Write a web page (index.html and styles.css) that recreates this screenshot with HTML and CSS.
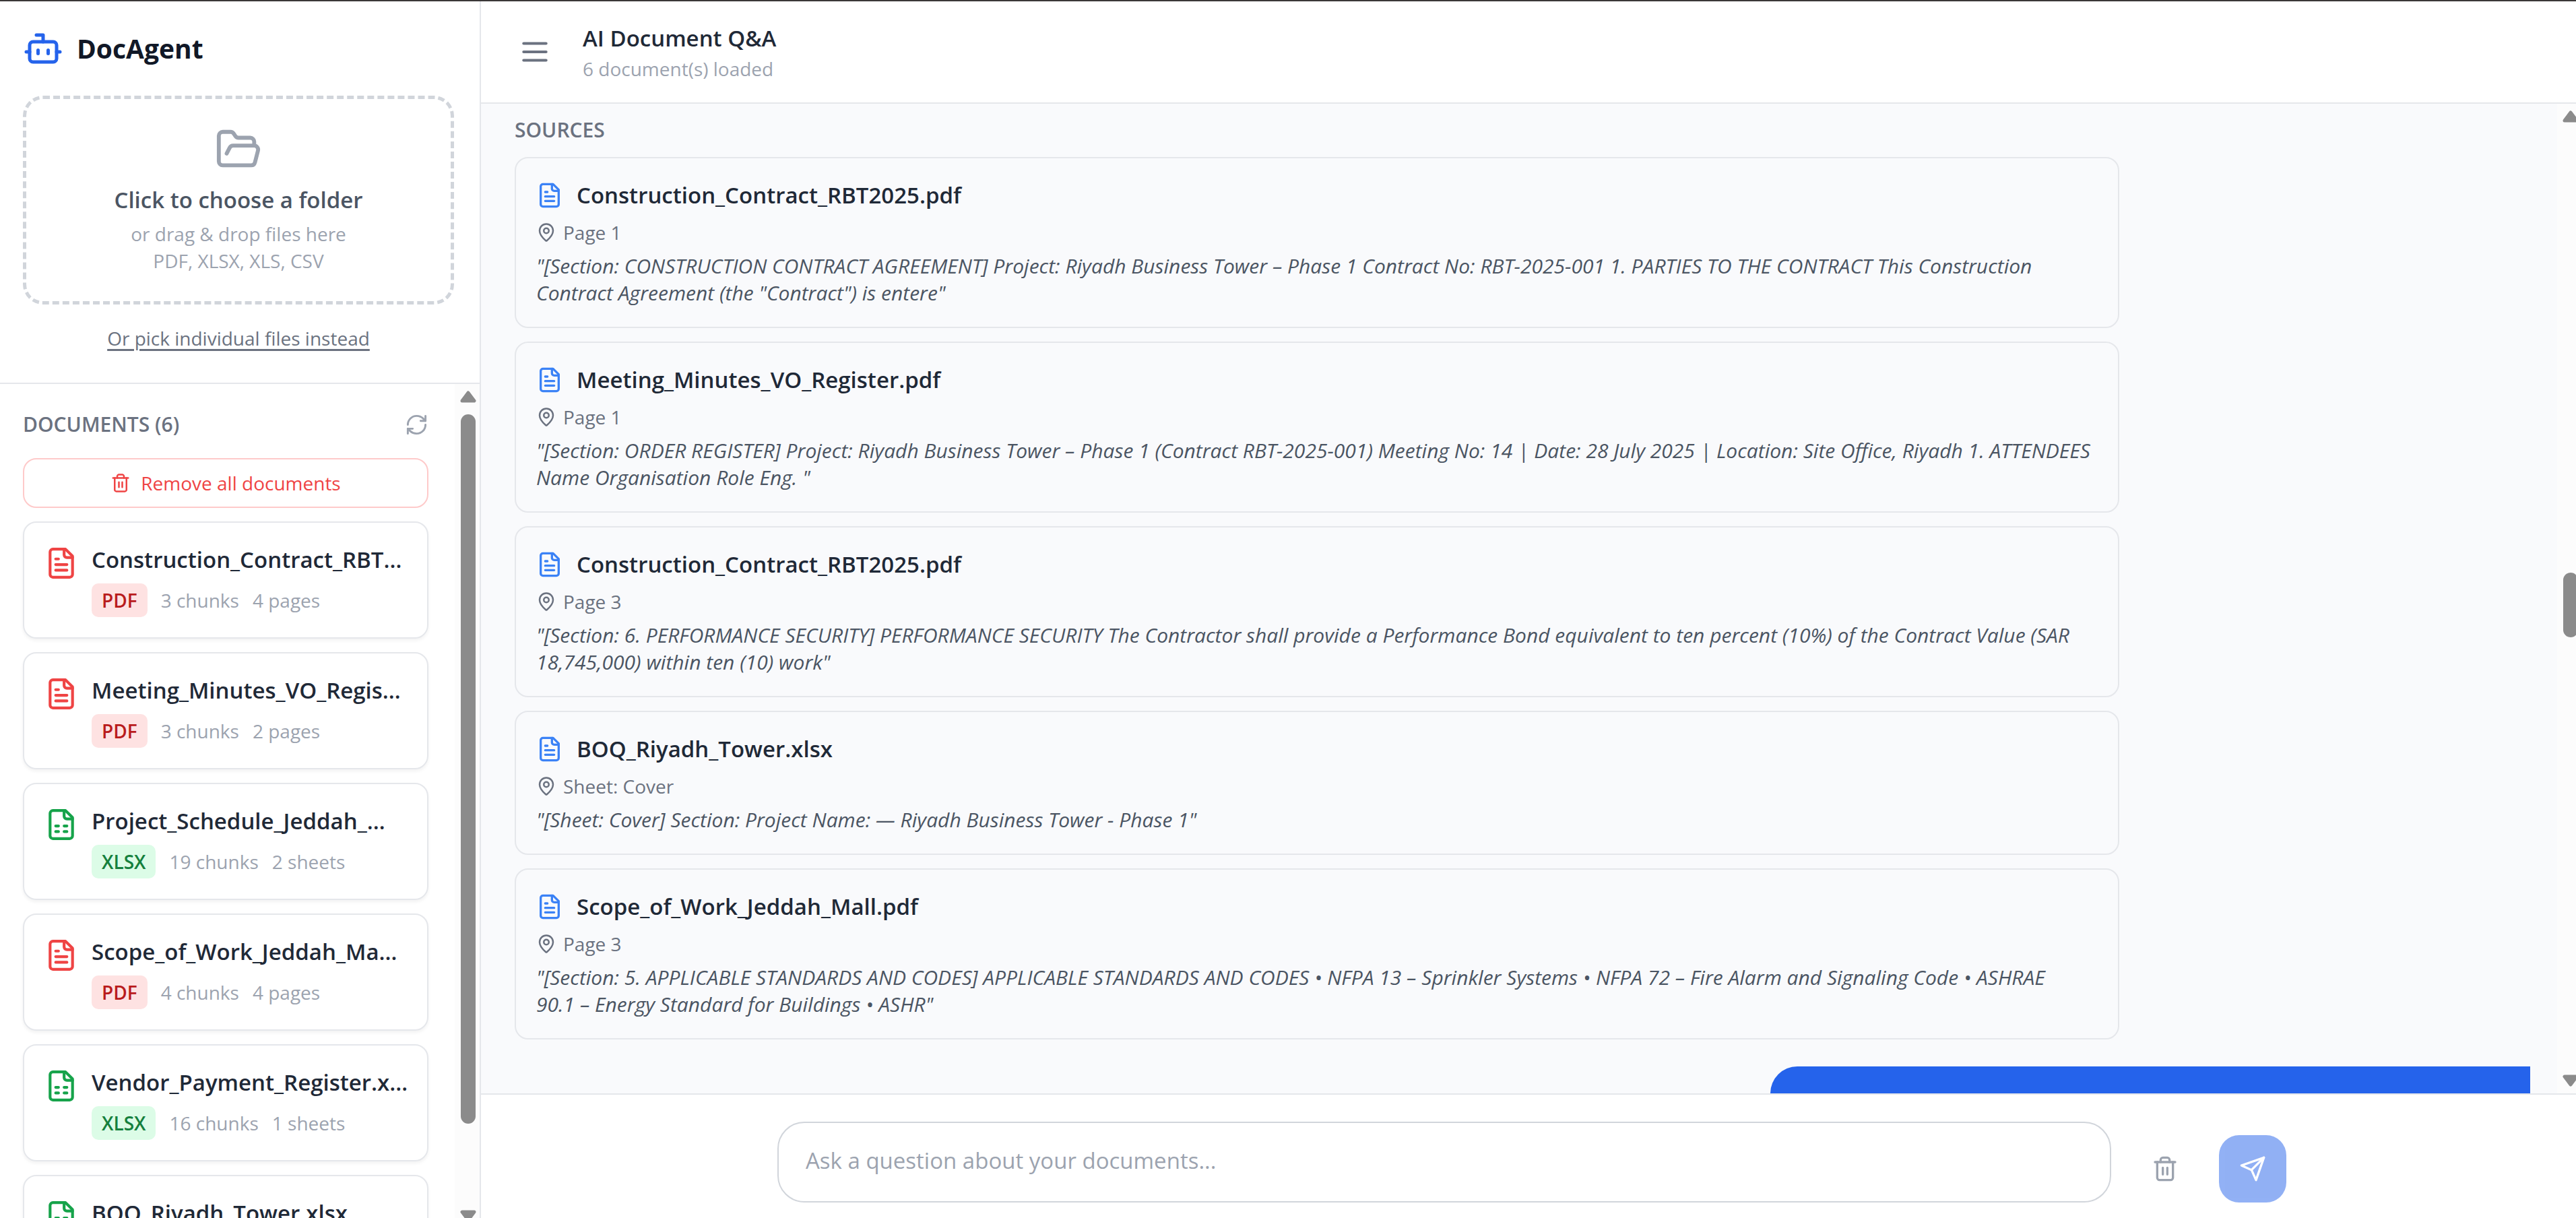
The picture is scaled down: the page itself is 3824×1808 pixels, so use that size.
FILE: index.html
```
<!DOCTYPE html>
<html lang="en">
<head>
<meta charset="utf-8">
<meta name="viewport" content="width=device-width, initial-scale=1">
<title>DocAgent</title>
<link rel="stylesheet" href="styles.css">
</head>
<body>
<svg class="sprite" aria-hidden="true">
  <symbol id="bot" viewBox="0 0 24 24"><path d="M12 8V4H8"/><rect width="16" height="12" x="4" y="8" rx="2"/><path d="M2 14h2M20 14h2M15 13v2M9 13v2"/></symbol>
  <symbol id="folder" viewBox="0 0 24 24"><path d="m6 14 1.5-2.9A2 2 0 0 1 9.24 10H20a2 2 0 0 1 1.94 2.5l-1.54 6a2 2 0 0 1-1.95 1.5H4a2 2 0 0 1-2-2V5a2 2 0 0 1 2-2h3.9a2 2 0 0 1 1.69.9l.81 1.2a2 2 0 0 0 1.67.9H18a2 2 0 0 1 2 2v2"/></symbol>
  <symbol id="refresh" viewBox="0 0 24 24"><path d="M3 12a9 9 0 0 1 9-9 9.75 9.75 0 0 1 6.74 2.74L21 8"/><path d="M21 3v5h-5"/><path d="M21 12a9 9 0 0 1-9 9 9.75 9.75 0 0 1-6.74-2.74L3 16"/><path d="M8 16H3v5"/></symbol>
  <symbol id="trash" viewBox="0 0 24 24"><path d="M3 6h18"/><path d="M19 6v14c0 1-1 2-2 2H7c-1 0-2-1-2-2V6"/><path d="M8 6V4c0-1 1-2 2-2h4c1 0 2 1 2 2v2"/><path d="M10 11v6M14 11v6"/></symbol>
  <symbol id="file-text" viewBox="0 0 24 24"><path d="M15 2H6a2 2 0 0 0-2 2v16a2 2 0 0 0 2 2h12a2 2 0 0 0 2-2V7Z"/><path d="M14 2v4a2 2 0 0 0 2 2h4"/><path d="M10 9H8M16 13H8M16 17H8"/></symbol>
  <symbol id="file-sheet" viewBox="0 0 24 24"><path d="M15 2H6a2 2 0 0 0-2 2v16a2 2 0 0 0 2 2h12a2 2 0 0 0 2-2V7Z"/><path d="M14 2v4a2 2 0 0 0 2 2h4"/><path d="M8 13h2M14 13h2M8 17h2M14 17h2"/></symbol>
  <symbol id="menu" viewBox="0 0 24 24"><path d="M4 6h16M4 12h16M4 18h16"/></symbol>
  <symbol id="pin" viewBox="0 0 24 24"><path d="M20 10c0 4.993-5.539 10.193-7.399 11.799a1 1 0 0 1-1.202 0C9.539 20.193 4 14.993 4 10a8 8 0 0 1 16 0"/><circle cx="12" cy="10" r="3"/></symbol>
  <symbol id="send" viewBox="0 0 24 24"><path d="m22 2-7 20-4-9-9-4Z"/><path d="M22 2 11 13"/></symbol>
  <symbol id="arrow" viewBox="0 0 24 18"><path d="M12 3 21 15H3Z" fill="currentColor" stroke-width="5"/></symbol>
</svg>

<div class="app">
  <aside class="sidebar">
    <div class="upload">
      <div class="brand"><svg class="icon icon-60"><use href="#bot"/></svg><h1>DocAgent</h1></div>
      <button type="button" class="dropzone">
        <svg class="icon icon-70"><use href="#folder"/></svg>
        <span class="dropzone-title">Click to choose a folder</span>
        <span class="dropzone-hint">or drag &amp; drop files here</span>
        <span class="dropzone-hint">PDF, XLSX, XLS, CSV</span>
      </button>
      <button type="button" class="pick-files">Or pick individual files instead</button>
    </div>
    <div class="library">
      <section class="library-content">
        <div class="library-head">
          <h2 class="label">Documents (6)</h2>
          <button type="button" class="refresh" aria-label="Refresh documents"><svg class="icon icon-35"><use href="#refresh"/></svg></button>
        </div>
        <button type="button" class="remove-all"><svg class="icon icon-30"><use href="#trash"/></svg>Remove all documents</button>
        <ul class="docs">
          <li class="doc pdf"><svg class="icon icon-50"><use href="#file-text"/></svg><div class="doc-body"><p class="doc-name">Construction_Contract_RBT…</p><p class="doc-meta"><span class="badge">PDF</span><span>3 chunks</span><span>4 pages</span></p></div></li>
          <li class="doc pdf"><svg class="icon icon-50"><use href="#file-text"/></svg><div class="doc-body"><p class="doc-name">Meeting_Minutes_VO_Regis…</p><p class="doc-meta"><span class="badge">PDF</span><span>3 chunks</span><span>2 pages</span></p></div></li>
          <li class="doc xlsx"><svg class="icon icon-50"><use href="#file-sheet"/></svg><div class="doc-body"><p class="doc-name">Project_Schedule_Jeddah_…</p><p class="doc-meta"><span class="badge">XLSX</span><span>19 chunks</span><span>2 sheets</span></p></div></li>
          <li class="doc pdf"><svg class="icon icon-50"><use href="#file-text"/></svg><div class="doc-body"><p class="doc-name">Scope_of_Work_Jeddah_Ma…</p><p class="doc-meta"><span class="badge">PDF</span><span>4 chunks</span><span>4 pages</span></p></div></li>
          <li class="doc xlsx"><svg class="icon icon-50"><use href="#file-sheet"/></svg><div class="doc-body"><p class="doc-name">Vendor_Payment_Register.x…</p><p class="doc-meta"><span class="badge">XLSX</span><span>16 chunks</span><span>1 sheets</span></p></div></li>
          <li class="doc xlsx"><svg class="icon icon-50"><use href="#file-sheet"/></svg><div class="doc-body"><p class="doc-name">BOQ_Riyadh_Tower.xlsx</p></div></li>
        </ul>
      </section>
      <div class="scrollbar library-scrollbar" aria-hidden="true">
        <svg class="arrow"><use href="#arrow"/></svg>
        <div class="track"><div class="thumb"></div></div>
        <svg class="arrow down"><use href="#arrow"/></svg>
      </div>
    </div>
  </aside>

  <main class="main">
    <header class="topbar">
      <button type="button" class="menu" aria-label="Toggle sidebar"><svg class="icon icon-50"><use href="#menu"/></svg></button>
      <div><h2 class="topbar-title">AI Document Q&amp;A</h2><p class="topbar-sub">6 document(s) loaded</p></div>
    </header>

    <div class="chat">
      <div class="messages">
        <section class="sources">
          <h3 class="label">Sources</h3>
          <article class="source">
            <h4><svg class="icon icon-40"><use href="#file-text"/></svg>Construction_Contract_RBT2025.pdf</h4>
            <p class="place"><svg class="icon icon-30"><use href="#pin"/></svg>Page 1</p>
            <p class="quote">"[Section: CONSTRUCTION CONTRACT AGREEMENT] Project: Riyadh Business Tower – Phase 1 Contract No: RBT-2025-001 1. PARTIES TO THE CONTRACT This Construction Contract Agreement (the "Contract") is entere"</p>
          </article>
          <article class="source">
            <h4><svg class="icon icon-40"><use href="#file-text"/></svg>Meeting_Minutes_VO_Register.pdf</h4>
            <p class="place"><svg class="icon icon-30"><use href="#pin"/></svg>Page 1</p>
            <p class="quote">"[Section: ORDER REGISTER] Project: Riyadh Business Tower – Phase 1 (Contract RBT-2025-001) Meeting No: 14 | Date: 28 July 2025 | Location: Site Office, Riyadh 1. ATTENDEES Name Organisation Role Eng. "</p>
          </article>
          <article class="source">
            <h4><svg class="icon icon-40"><use href="#file-text"/></svg>Construction_Contract_RBT2025.pdf</h4>
            <p class="place"><svg class="icon icon-30"><use href="#pin"/></svg>Page 3</p>
            <p class="quote">"[Section: 6. PERFORMANCE SECURITY] PERFORMANCE SECURITY The Contractor shall provide a Performance Bond equivalent to ten percent (10%) of the Contract Value (SAR 18,745,000) within ten (10) work"</p>
          </article>
          <article class="source">
            <h4><svg class="icon icon-40"><use href="#file-text"/></svg>BOQ_Riyadh_Tower.xlsx</h4>
            <p class="place"><svg class="icon icon-30"><use href="#pin"/></svg>Sheet: Cover</p>
            <p class="quote">"[Sheet: Cover] Section: Project Name: — Riyadh Business Tower - Phase 1"</p>
          </article>
          <article class="source">
            <h4><svg class="icon icon-40"><use href="#file-text"/></svg>Scope_of_Work_Jeddah_Mall.pdf</h4>
            <p class="place"><svg class="icon icon-30"><use href="#pin"/></svg>Page 3</p>
            <p class="quote">"[Section: 5. APPLICABLE STANDARDS AND CODES] APPLICABLE STANDARDS AND CODES • NFPA 13 – Sprinkler Systems • NFPA 72 – Fire Alarm and Signaling Code • ASHRAE 90.1&nbsp;–&nbsp;Energy Standard for Buildings • ASHR"</p>
          </article>
        </section>
        <div class="bubble"></div>
      </div>
      <div class="scrollbar chat-scrollbar" aria-hidden="true">
        <svg class="arrow"><use href="#arrow"/></svg>
        <div class="track"><div class="thumb"></div></div>
        <svg class="arrow down"><use href="#arrow"/></svg>
      </div>
    </div>

    <form class="composer">
      <div class="composer-row">
        <textarea rows="1" aria-label="Question" placeholder="Ask a question about your documents..."></textarea>
        <button type="button" class="square clear" aria-label="Clear chat"><svg class="icon icon-40"><use href="#trash"/></svg></button>
        <button type="submit" class="square send" aria-label="Send" disabled><svg class="icon icon-40"><use href="#send"/></svg></button>
      </div>
    </form>
  </main>
</div>
</body>
</html>
```
FILE: styles.css
```
*, *::before, *::after { box-sizing: border-box; }

body {
  margin: 0;
  font-family: "Open Sans", "Noto Sans", sans-serif;
  font-size: 28px;
  line-height: 40px;
  color: #1f2937;
  background: #fff;
}

h1, h2, h3, h4, p, ul { margin: 0; padding: 0; font-weight: inherit; font-size: inherit; }
ul { list-style: none; }
button { font: inherit; color: inherit; background: none; border: 0; padding: 0; margin: 0; cursor: pointer; }

.sprite { display: none; }
.icon, .arrow { display: block; flex: none; fill: none; stroke: currentColor; stroke-width: 2; stroke-linecap: round; stroke-linejoin: round; }
.icon-30 { width: 30px; height: 30px; }
.icon-35 { width: 35px; height: 35px; }
.icon-40 { width: 40px; height: 40px; }
.icon-50 { width: 50px; height: 50px; }
.icon-60 { width: 60px; height: 60px; }
.icon-70 { width: 70px; height: 70px; }

.label { font-size: 30px; font-weight: 600; text-transform: uppercase; color: #6b7280; }

.app {
  display: grid;
  grid-template-columns: 714px minmax(0, 1fr);
  height: 100vh;
  border-top: 2px solid #3b3838;
  overflow: hidden;
}

/* Sidebar */
.sidebar { display: flex; flex-direction: column; min-height: 0; border-right: 2px solid #e5e7eb; }
.upload { display: flex; flex-direction: column; padding: 40px 38px 46px 34px; border-bottom: 2px solid #e5e7eb; }
.brand { display: flex; align-items: center; gap: 20px; margin-bottom: 40px; color: #2563eb; }
.brand h1 { font-size: 39px; line-height: 60px; font-weight: 700; color: #111827; }
.dropzone {
  display: flex; flex-direction: column; align-items: center;
  padding: 40px; border: 5px dashed #d1d5db; border-radius: 30px; color: #9ca3af;
}
.dropzone-title { margin: 15px 0 5px; font-size: 33px; line-height: 50px; font-weight: 600; color: #4b5563; }
.pick-files {
  align-self: center; margin-top: 30px; color: #6b7280;
  text-decoration: underline; text-decoration-thickness: 3px; text-underline-offset: 5px;
}

.library { display: grid; grid-template: minmax(0, 1fr) / minmax(0, 1fr) 37px; flex: 1; min-height: 0; overflow: hidden; }
.library-content { padding: 40px 39px 0 34px; }
.library-head { display: flex; align-items: center; justify-content: space-between; margin-bottom: 30px; }
.refresh { color: #9ca3af; }
.remove-all {
  display: flex; align-items: center; justify-content: center; gap: 15px; width: 100%;
  padding: 15px; border: 2px solid #fecaca; border-radius: 20px; color: #ef4444;
}
.docs { display: flex; flex-direction: column; gap: 20px; margin-top: 20px; }
.doc {
  display: flex; gap: 20px; padding: 30px;
  border: 2px solid #e5e7eb; border-radius: 20px; box-shadow: 0 3px 5px rgba(0, 0, 0, .05);
}
.doc .icon { margin-top: 5px; }
.doc-body { flex: 1; min-width: 0; }
.doc-name { font-size: 33px; line-height: 50px; font-weight: 600; white-space: nowrap; }
.doc-meta { display: flex; align-items: center; gap: 20px; margin-top: 10px; color: #9ca3af; }
.badge { padding: 5px 15px; border-radius: 10px; font-weight: 600; }
.pdf .icon { color: #ef4444; }
.pdf .badge { background: #fee2e2; color: #b91c1c; }
.xlsx .icon { color: #16a34a; }
.xlsx .badge { background: #dcfce7; color: #15803d; }

/* Scrollbars */
.scrollbar { display: flex; flex-direction: column; gap: 17px; padding: 10px 0 10px 8px; background: #fcfcfc; color: #8b8b8b; overflow: hidden; min-height: 0; }
.scrollbar .arrow { width: 24px; height: 18px; }
.scrollbar .down { transform: rotate(180deg); }
.track { display: flex; flex-direction: column; flex: 1; min-height: 0; }
.track::before, .track::after { content: ""; }
.thumb { width: 22px; margin-left: 1px; border-radius: 11px; background: #8b8b8b; }
.library-scrollbar { margin-bottom: -16px; }
.library-scrollbar .thumb { flex: 1053; }
.library-scrollbar .track::after { flex: 111; }
.chat-scrollbar .thumb { flex: 96; }
.chat-scrollbar .track::before { flex: 650; }
.chat-scrollbar .track::after { flex: 631; }

/* Main column */
.main { display: flex; flex-direction: column; min-height: 0; }
.topbar { display: flex; align-items: center; padding: 30px 50px 30px 55px; gap: 46px; border-bottom: 2px solid #e5e7eb; }
.menu { color: #6b7280; }
.topbar-title { font-size: 33px; line-height: 50px; font-weight: 600; }
.topbar-sub { color: #9ca3af; }

.chat { display: grid; grid-template: minmax(0, 1fr) / minmax(0, 1fr) 28px; flex: 1; min-height: 0; overflow: hidden; background: #f9fafc; }
.messages { display: flex; flex-direction: column; gap: 40px; padding: 19px 40px 0 50px; min-height: 0; }
.sources { display: flex; flex-direction: column; gap: 20px; margin-right: 610px; }
.source { display: flex; flex-direction: column; gap: 10px; padding: 30px; border: 2px solid #e5e7eb; border-radius: 20px; }
.source h4 { display: flex; align-items: center; gap: 20px; font-size: 33px; line-height: 50px; font-weight: 600; }
.source h4 .icon { color: #3b82f6; }
.place { display: flex; align-items: center; gap: 10px; color: #6b7280; }
.quote { font-size: 30px; font-style: italic; color: #4b5563; }
.bubble { align-self: flex-end; flex: none; width: 1128px; height: 110px; border-radius: 40px 0 40px 40px; background: #2563eb; }

.composer { padding: 40px 50px 23px 60px; border-top: 2px solid #e5e7eb; }
.composer-row { display: flex; align-items: flex-end; gap: 30px; max-width: 2240px; margin: 0 auto; }
.composer textarea {
  flex: 1; min-width: 0; height: 120px; padding: 31px 40px; border: 2px solid #d1d5db; border-radius: 40px;
  font: inherit; font-size: 33px; line-height: 50px; color: inherit; background: #fff; resize: none; overflow: hidden; outline: none;
}
.composer textarea::placeholder { color: #9ca3af; opacity: 1; }
.square { display: grid; place-items: center; width: 100px; height: 100px; border-radius: 30px; }
.clear { color: #9ca3af; }
.send { background: #2563eb; color: #fff; opacity: .5; }
```
